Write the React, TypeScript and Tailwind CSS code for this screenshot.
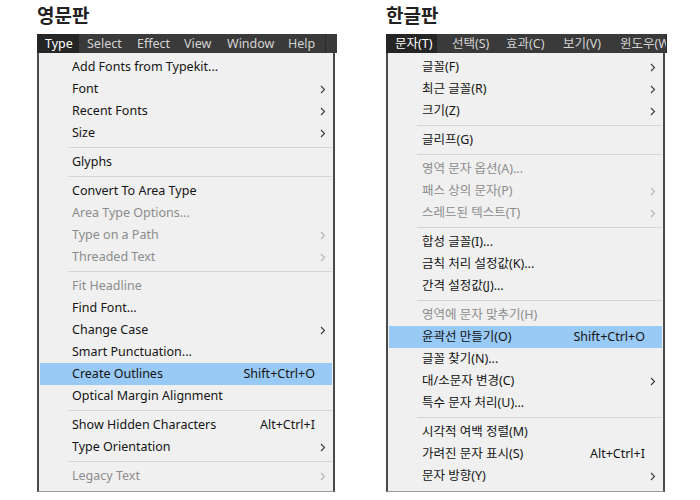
import React from 'react';

type Item =
  | { sep: true }
  | { label: string; disabled?: boolean; sub?: boolean; shortcut?: string; active?: boolean };

const FONT = { fontFamily: '"Noto Sans", "Noto Sans CJK KR", sans-serif' };

const englishBar = [
  { label: 'Type', w: 'w-[42px]', pl: 'pl-[8px]' },
  { label: 'Select', w: 'w-[50px]', pl: 'pl-[8px]' },
  { label: 'Effect', w: 'w-[47px]', pl: 'pl-[8px]' },
  { label: 'View', w: 'w-[43px]', pl: 'pl-[8px]' },
  { label: 'Window', w: 'w-[61px]', pl: 'pl-[8px]' },
  { label: 'Help', w: 'w-[45px]', pl: 'pl-[8px]' },
];

const koreanBar = [
  { label: '문자(T)', w: 'w-[51px]', pl: 'pl-[9px]' },
  { label: '선택(S)', w: 'w-[54px]', pl: 'pl-[15px]' },
  { label: '효과(C)', w: 'w-[57px]', pl: 'pl-[15px]' },
  { label: '보기(V)', w: 'w-[57px]', pl: 'pl-[15px]' },
  { label: '윈도우(W)', w: 'w-[61px]', pl: 'pl-[15px]' },
];

const englishItems: Item[] = [
  { label: 'Add Fonts from Typekit...' },
  { label: 'Font', sub: true },
  { label: 'Recent Fonts', sub: true },
  { label: 'Size', sub: true },
  { sep: true },
  { label: 'Glyphs' },
  { sep: true },
  { label: 'Convert To Area Type' },
  { label: 'Area Type Options...', disabled: true },
  { label: 'Type on a Path', disabled: true, sub: true },
  { label: 'Threaded Text', disabled: true, sub: true },
  { sep: true },
  { label: 'Fit Headline', disabled: true },
  { label: 'Find Font...' },
  { label: 'Change Case', sub: true },
  { label: 'Smart Punctuation...' },
  { label: 'Create Outlines', shortcut: 'Shift+Ctrl+O', active: true },
  { label: 'Optical Margin Alignment' },
  { sep: true },
  { label: 'Show Hidden Characters', shortcut: 'Alt+Ctrl+I' },
  { label: 'Type Orientation', sub: true },
  { sep: true },
  { label: 'Legacy Text', disabled: true, sub: true },
];

const koreanItems: Item[] = [
  { label: '글꼴(F)', sub: true },
  { label: '최근 글꼴(R)', sub: true },
  { label: '크기(Z)', sub: true },
  { sep: true },
  { label: '글리프(G)' },
  { sep: true },
  { label: '영역 문자 옵션(A)...', disabled: true },
  { label: '패스 상의 문자(P)', disabled: true, sub: true },
  { label: '스레드된 텍스트(T)', disabled: true, sub: true },
  { sep: true },
  { label: '합성 글꼴(I)...' },
  { label: '금칙 처리 설정값(K)...' },
  { label: '간격 설정값(J)...' },
  { sep: true },
  { label: '영역에 문자 맞추기(H)', disabled: true },
  { label: '윤곽선 만들기(O)', shortcut: 'Shift+Ctrl+O', active: true },
  { label: '글꼴 찾기(N)...' },
  { label: '대/소문자 변경(C)', sub: true },
  { label: '특수 문자 처리(U)...' },
  { sep: true },
  { label: '시각적 여백 정렬(M)' },
  { label: '가려진 문자 표시(S)', shortcut: 'Alt+Ctrl+I' },
  { label: '문자 방향(Y)', sub: true },
];

function Chevron({ disabled }: { disabled?: boolean }) {
  return (
    <svg width="6" height="9" viewBox="0 0 6 9" className="block">
      <path d="M1 1l3.5 3.5L1 8" fill="none" stroke={disabled ? '#b4b4b4' : '#3a3a3a'} strokeWidth="1.1" />
    </svg>
  );
}

function Menu({
  title,
  bar,
  items,
  width,
  textPl,
}: {
  title: string;
  bar: { label: string; w: string; pl: string }[];
  items: Item[];
  width: string;
  textPl: string;
}) {
  return (
    <div className={`flex flex-col ${width}`}>
      <div className="h-[34px] pt-[3px] text-[19px] font-bold leading-[26px] text-[#222]">{title}</div>
      <div className="flex h-[19px] overflow-hidden bg-[#3a3a3a] text-[12.5px] leading-[19px]">
        {bar.map((b, i) => (
          <div
            key={b.label}
            className={`${b.w} ${b.pl} shrink-0 whitespace-nowrap ${i === 0 ? 'bg-[#252525] text-white' : 'text-[#d4d4d4]'}`}
          >
            {b.label}
          </div>
        ))}
        <div className="flex-1 border-l border-[#2a2a2a]" />
      </div>
      <div className="mr-[2px] border-x-2 border-b border-x-[#4a4a4a] border-b-[#9a9a9a] bg-[#f0f0f0] px-[1px] pt-[3px] pb-[4px]">
        {items.map((it, i) =>
          'sep' in it ? (
            <div key={i} className="flex h-[7px] items-center pl-[28px]">
              <div className="h-px w-full bg-[#d5d5d5]" />
            </div>
          ) : (
            <div
              key={i}
              className={`flex h-[22px] items-center text-[12.5px] ${textPl} ${it.active ? 'bg-[#99c9f5]' : ''} ${
                it.disabled ? 'text-[#8c8c8c]' : 'text-[#141414]'
              }`}
            >
              <span className="flex-1 whitespace-nowrap">{it.label}</span>
              {it.shortcut && <span className="whitespace-nowrap">{it.shortcut}</span>}
              <span className="flex w-[17px] justify-end pr-[6px]">{it.sub && <Chevron disabled={it.disabled} />}</span>
            </div>
          ),
        )}
      </div>
    </div>
  );
}

export default function App() {
  return (
    <div className="flex h-[500px] w-[700px] gap-[49px] bg-white pl-[37px]" style={FONT}>
      <Menu title="영문판" bar={englishBar} items={englishItems} width="w-[300px]" textPl="pl-[32px]" />
      <Menu title="한글판" bar={koreanBar} items={koreanItems} width="w-[281px]" textPl="pl-[33px]" />
    </div>
  );
}
